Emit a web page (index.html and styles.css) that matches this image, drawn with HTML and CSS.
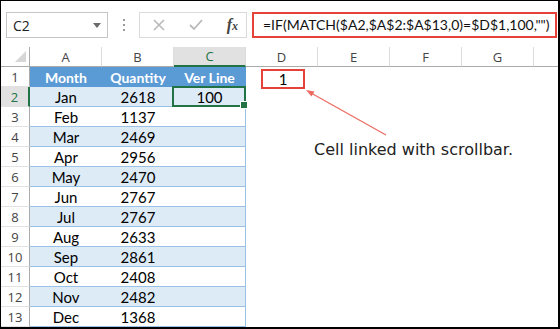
FILE: index.html
```html
<!DOCTYPE html>
<html>
<head>
<meta charset="utf-8">
<link rel="stylesheet" href="styles.css">
</head>
<body>
<div class="frame">
  <div class="fbar">
    <div class="namebox"><span class="nm">C2</span><span class="caret"></span></div>
    <div class="dots"><i></i><i></i><i></i></div>
    <div class="btns">
      <svg class="ico" width="14" height="14" viewBox="0 0 14 14"><path d="M2 2 L12 12 M12 2 L2 12" stroke="#b9b9b9" stroke-width="1.6" fill="none"/></svg>
      <svg class="ico" width="16" height="14" viewBox="0 0 16 14"><path d="M2 7 L6 11 L14 2" stroke="#b9b9b9" stroke-width="1.8" fill="none"/></svg>
      <span class="fx"><i>f</i><i class="sx">x</i></span>
    </div>
    <div class="formula">=IF(MATCH($A2,$A$2:$A$13,0)=$D$1,100,"")</div>
  </div>
  <div class="sheet">
    <div class="corner"><span class="tri"></span></div>
    <div class="ch">A</div><div class="ch">B</div><div class="ch sel">C</div><div class="ch">D</div><div class="ch">E</div><div class="ch">F</div><div class="ch">G</div><div class="ch last"></div>

    <div class="rh">1</div><div class="c th">Month</div><div class="c th">Quantity</div><div class="c th end">Ver Line</div><div class="c d1"><span class="mark">1</span></div><div class="c rest"></div>

    <div class="rh sel">2</div><div class="c tb">Jan</div><div class="c tb">2618</div><div class="c tb end active">100</div><div class="c rest5"></div>
    <div class="rh">3</div><div class="c tw">Feb</div><div class="c tw">1137</div><div class="c tw end"></div><div class="c rest5"></div>
    <div class="rh">4</div><div class="c tb">Mar</div><div class="c tb">2469</div><div class="c tb end"></div><div class="c rest5"></div>
    <div class="rh">5</div><div class="c tw">Apr</div><div class="c tw">2956</div><div class="c tw end"></div><div class="c rest5"></div>
    <div class="rh">6</div><div class="c tb">May</div><div class="c tb">2470</div><div class="c tb end"></div><div class="c rest5"></div>
    <div class="rh">7</div><div class="c tw">Jun</div><div class="c tw">2767</div><div class="c tw end"></div><div class="c rest5"></div>
    <div class="rh">8</div><div class="c tb">Jul</div><div class="c tb">2767</div><div class="c tb end"></div><div class="c rest5"></div>
    <div class="rh">9</div><div class="c tw">Aug</div><div class="c tw">2633</div><div class="c tw end"></div><div class="c rest5"></div>
    <div class="rh">10</div><div class="c tb">Sep</div><div class="c tb">2861</div><div class="c tb end"></div><div class="c rest5"></div>
    <div class="rh">11</div><div class="c tw">Oct</div><div class="c tw">2408</div><div class="c tw end"></div><div class="c rest5"></div>
    <div class="rh">12</div><div class="c tb">Nov</div><div class="c tb">2482</div><div class="c tb end"></div><div class="c rest5"></div>
    <div class="rh">13</div><div class="c tw">Dec</div><div class="c tw">1368</div><div class="c tw end"></div><div class="c rest5"></div>
  </div>
  <svg class="arrow" width="560" height="329" viewBox="0 0 560 329">
    <line x1="386" y1="135" x2="311" y2="93" stroke="#ec6a60" stroke-width="1.2"/>
    <path d="M306 90 L314.5 91.5 L311.5 96.5 Z" fill="#ec6a60"/>
  </svg>
  <div class="note">Cell linked with scrollbar.</div>
</div>
</body>
</html>
```
FILE: styles.css
```css
* { box-sizing: border-box; }
html, body { margin: 0; padding: 0; background: #fff; }
.frame {
  position: relative;
  width: 560px;
  height: 329px;
  border-style: solid;
  border-color: #000;
  border-width: 1px 2px 2px 1px;
  overflow: hidden;
  background: #fff;
  font-family: Lato, "Open Sans", sans-serif;
}
.fbar {
  height: 46px;
  display: flex;
  align-items: flex-start;
  padding: 11px 0 0 5px;
}
.namebox {
  width: 102px;
  height: 26px;
  border: 1px solid #c6c6c6;
  display: flex;
  align-items: center;
  justify-content: space-between;
  padding: 0 6px 0 6px;
}
.nm { font-family: "Open Sans", sans-serif; font-size: 14px; color: #222; }
.caret {
  width: 0; height: 0;
  border-left: 4px solid transparent;
  border-right: 4px solid transparent;
  border-top: 5px solid #6a6a6a;
}
.dots {
  width: 31px;
  height: 26px;
  display: flex;
  flex-direction: column;
  align-items: center;
  justify-content: center;
  gap: 3px;
}
.dots i { display: block; width: 2px; height: 2px; background: #9a9a9a; }
.btns {
  width: 108px;
  height: 26px;
  border: 1px solid #dadada;
  display: flex;
  align-items: center;
  padding: 0 8px 0 12px;
  justify-content: space-between;
}
.fx { font-family: "Liberation Serif", serif; font-size: 16px; color: #444; font-weight: bold; }
.fx .sx { font-size: 12px; }
.formula {
  margin-left: 5px;
  width: 305px;
  height: 26px;
  border: 2px solid #e5433a;
  font-size: 14px;
  line-height: 22px;
  padding-left: 9px;
  color: #111;
  white-space: nowrap;
  overflow: hidden;
}
.sheet {
  display: grid;
  grid-template-columns: 29px repeat(7, 72px) 1fr;
  grid-auto-rows: 20px;
}
.corner {
  border-right: 1px solid #ababab;
  border-bottom: 1px solid #ababab;
  position: relative;
}
.tri {
  position: absolute;
  right: 3px;
  bottom: 4px;
  width: 0; height: 0;
  border-left: 11px solid transparent;
  border-bottom: 11px solid #d6d6d6;
}
.ch {
  border-right: 1px solid #dcdcdc;
  border-bottom: 1px solid #ababab;
  font-family: "Open Sans", sans-serif;
  font-size: 13px;
  color: #444;
  display: flex;
  align-items: center;
  justify-content: center;
}
.ch.sel { background: #e1e1e1; border-bottom: 2px solid #217346; color: #217346; }
.ch.last { border-right: none; }
.rh {
  border-right: 1px solid #ababab;
  border-bottom: 1px solid #e1e1e1;
  font-family: "Open Sans", sans-serif;
  font-size: 13px;
  color: #444;
  display: flex;
  align-items: center;
  justify-content: center;
}
.rh.sel { background: #e1e1e1; border-right: 2px solid #217346; color: #217346; }
.c {
  display: flex;
  align-items: center;
  justify-content: center;
  font-size: 15px;
  color: #000;
  padding-top: 1px;
}
.th { background: #5b9bd5; color: #fff; font-weight: bold; font-size: 14px; border-bottom: 1px solid #5b9bd5; }
.tb { background: #ddebf7; border-bottom: 1px solid #9bc2e6; }
.tw { background: #fff; border-bottom: 1px solid #9bc2e6; }
.end { border-right: 1px solid #9bc2e6; }
.th.end { border-right: 1px solid #5b9bd5; }
.rest { grid-column: span 4; }
.rest5 { grid-column: span 5; }
.d1 { position: relative; }
.mark {
  position: absolute;
  left: 15px;
  top: 2px;
  width: 44px;
  height: 20px;
  border: 2px solid #e5433a;
  display: flex;
  align-items: center;
  justify-content: center;
  font-size: 15px;
}
.active { position: relative; }
.active::after {
  content: "";
  position: absolute;
  left: -2px;
  top: -1px;
  right: -1px;
  bottom: -1px;
  border: 2px solid #217346;
}
.active::before {
  content: "";
  position: absolute;
  right: -3px;
  bottom: -3px;
  width: 6px;
  height: 6px;
  background: #217346;
  border: 1px solid #fff;
  z-index: 2;
}
.arrow { position: absolute; left: -1px; top: -1px; pointer-events: none; }
.note {
  position: absolute;
  left: 313px;
  top: 139px;
  font-family: "DejaVu Sans", Verdana, sans-serif;
  font-size: 16px;
  line-height: 20px;
  color: #222;
  white-space: nowrap;
}
```
